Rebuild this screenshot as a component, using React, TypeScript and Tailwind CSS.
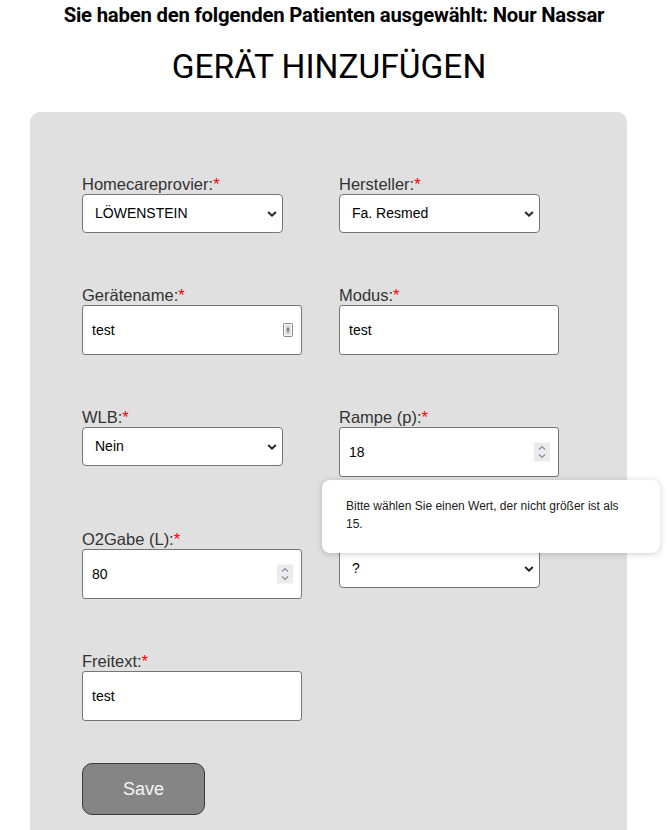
import React from 'react';

const Label = ({ text }: { text: string }) => (
  <label className="block h-[19px] text-[16.5px] leading-[18px] text-[#333]">
    {text}
    <span className="text-[#ff0000]">*</span>
  </label>
);

const Chevron = () => (
  <svg
    className="pointer-events-none absolute right-[6px] top-1/2 -translate-y-1/2"
    width="10"
    height="7"
    viewBox="0 0 10 7"
  >
    <path d="M1.2 1.5L5 5.2L8.8 1.5" stroke="#222" strokeWidth="1.9" fill="none" />
  </svg>
);

const SelectBox = ({ value }: { value: string }) => (
  <div className="relative w-[201px] h-[39px]">
    <select
      defaultValue={value}
      className="appearance-none w-full h-full rounded-[4px] border border-[#767676] bg-white pl-[12px] text-[14px] text-black outline-none"
    >
      <option>{value}</option>
    </select>
    <Chevron />
  </div>
);

// small autofill key icon shown by the browser
const AutofillIcon = () => (
  <svg className="absolute right-[9px] top-1/2 -translate-y-1/2" width="10" height="14" viewBox="0 0 10 14">
    <rect x="0.5" y="0.5" width="9" height="13" rx="1" fill="#f4f4f4" stroke="#8a8a8a" />
    <rect x="2.5" y="2.5" width="5" height="9" fill="#d8d8d8" />
    <path d="M5 4L7 7H3Z" fill="#7a7a7a" />
    <rect x="4.3" y="7" width="1.4" height="2.6" fill="#7a7a7a" />
  </svg>
);

const Spinner = () => (
  <div className="absolute right-[9px] top-1/2 -translate-y-1/2 flex h-[19px] w-[16px] flex-col items-center justify-center gap-[3px] bg-[#ebebef]">
    <svg width="8" height="5" viewBox="0 0 8 5">
      <path d="M1 4L4 1L7 4" stroke="#8c8c8c" strokeWidth="1.2" fill="none" />
    </svg>
    <svg width="8" height="5" viewBox="0 0 8 5">
      <path d="M1 1L4 4L7 1" stroke="#8c8c8c" strokeWidth="1.2" fill="none" />
    </svg>
  </div>
);

const TextBox = ({ value, trailing }: { value: string; trailing?: React.ReactNode }) => (
  <div className="relative w-[220px] h-[50px]">
    <input
      type="text"
      defaultValue={value}
      className="w-full h-full rounded-[3px] border border-[#767676] bg-white pl-[9px] text-[14px] text-black outline-none"
    />
    {trailing}
  </div>
);

export default function App() {
  return (
    <div className="min-h-[830px] bg-white font-['Liberation_Sans',Arial,sans-serif]">
      <h3 className="pt-[3px] text-center font-['Roboto',sans-serif] text-[20.3px] font-bold leading-[24px] tracking-[-0.2px] text-black">
        Sie haben den folgenden Patienten ausgewählt: Nour Nassar
      </h3>
      <h1 className="mt-[19px] pr-[10px] text-center font-['Roboto',sans-serif] text-[33.5px] font-normal leading-[42px] text-black">
        GERÄT HINZUFÜGEN
      </h1>

      <div className="ml-[30px] mt-[24px] w-[597px] rounded-[10px] bg-[#e0e0e0] pl-[52px] pt-[63px] pb-[40px]">
        <div className="grid grid-cols-[257px_257px] gap-y-[53px]">
          <div>
            <Label text="Homecareprovier:" />
            <SelectBox value="LÖWENSTEIN" />
          </div>
          <div>
            <Label text="Hersteller:" />
            <SelectBox value="Fa. Resmed" />
          </div>

          <div>
            <Label text="Gerätename:" />
            <TextBox value="test" trailing={<AutofillIcon />} />
          </div>
          <div>
            <Label text="Modus:" />
            <TextBox value="test" />
          </div>

          <div>
            <Label text="WLB:" />
            <SelectBox value="Nein" />
          </div>
          <div className="relative">
            <Label text="Rampe (p):" />
            <TextBox value="18" trailing={<Spinner />} />
            {/* browser validation bubble */}
            <div className="absolute left-[-17px] top-[72px] z-10 h-[73px] w-[338px] rounded-[8px] bg-white px-[24px] pt-[17px] text-[12px] leading-[18px] text-[#202020] shadow-[0_1px_6px_rgba(0,0,0,0.2)]">
              Bitte wählen Sie einen Wert, der nicht größer ist als
              <br />
              15.
            </div>
          </div>

          <div>
            <Label text="O2Gabe (L):" />
            <TextBox value="80" trailing={<Spinner />} />
          </div>
          <div>
            <Label text="Befeuchter:" />
            <SelectBox value="?" />
          </div>

          <div>
            <Label text="Freitext:" />
            <TextBox value="test" />
          </div>
        </div>

        <button className="mt-[42px] h-[52px] w-[123px] rounded-[10px] border border-[#3a3a3a] bg-[#858585] text-[18px] text-[#f4f4f4]">
          Save
        </button>
      </div>
    </div>
  );
}
